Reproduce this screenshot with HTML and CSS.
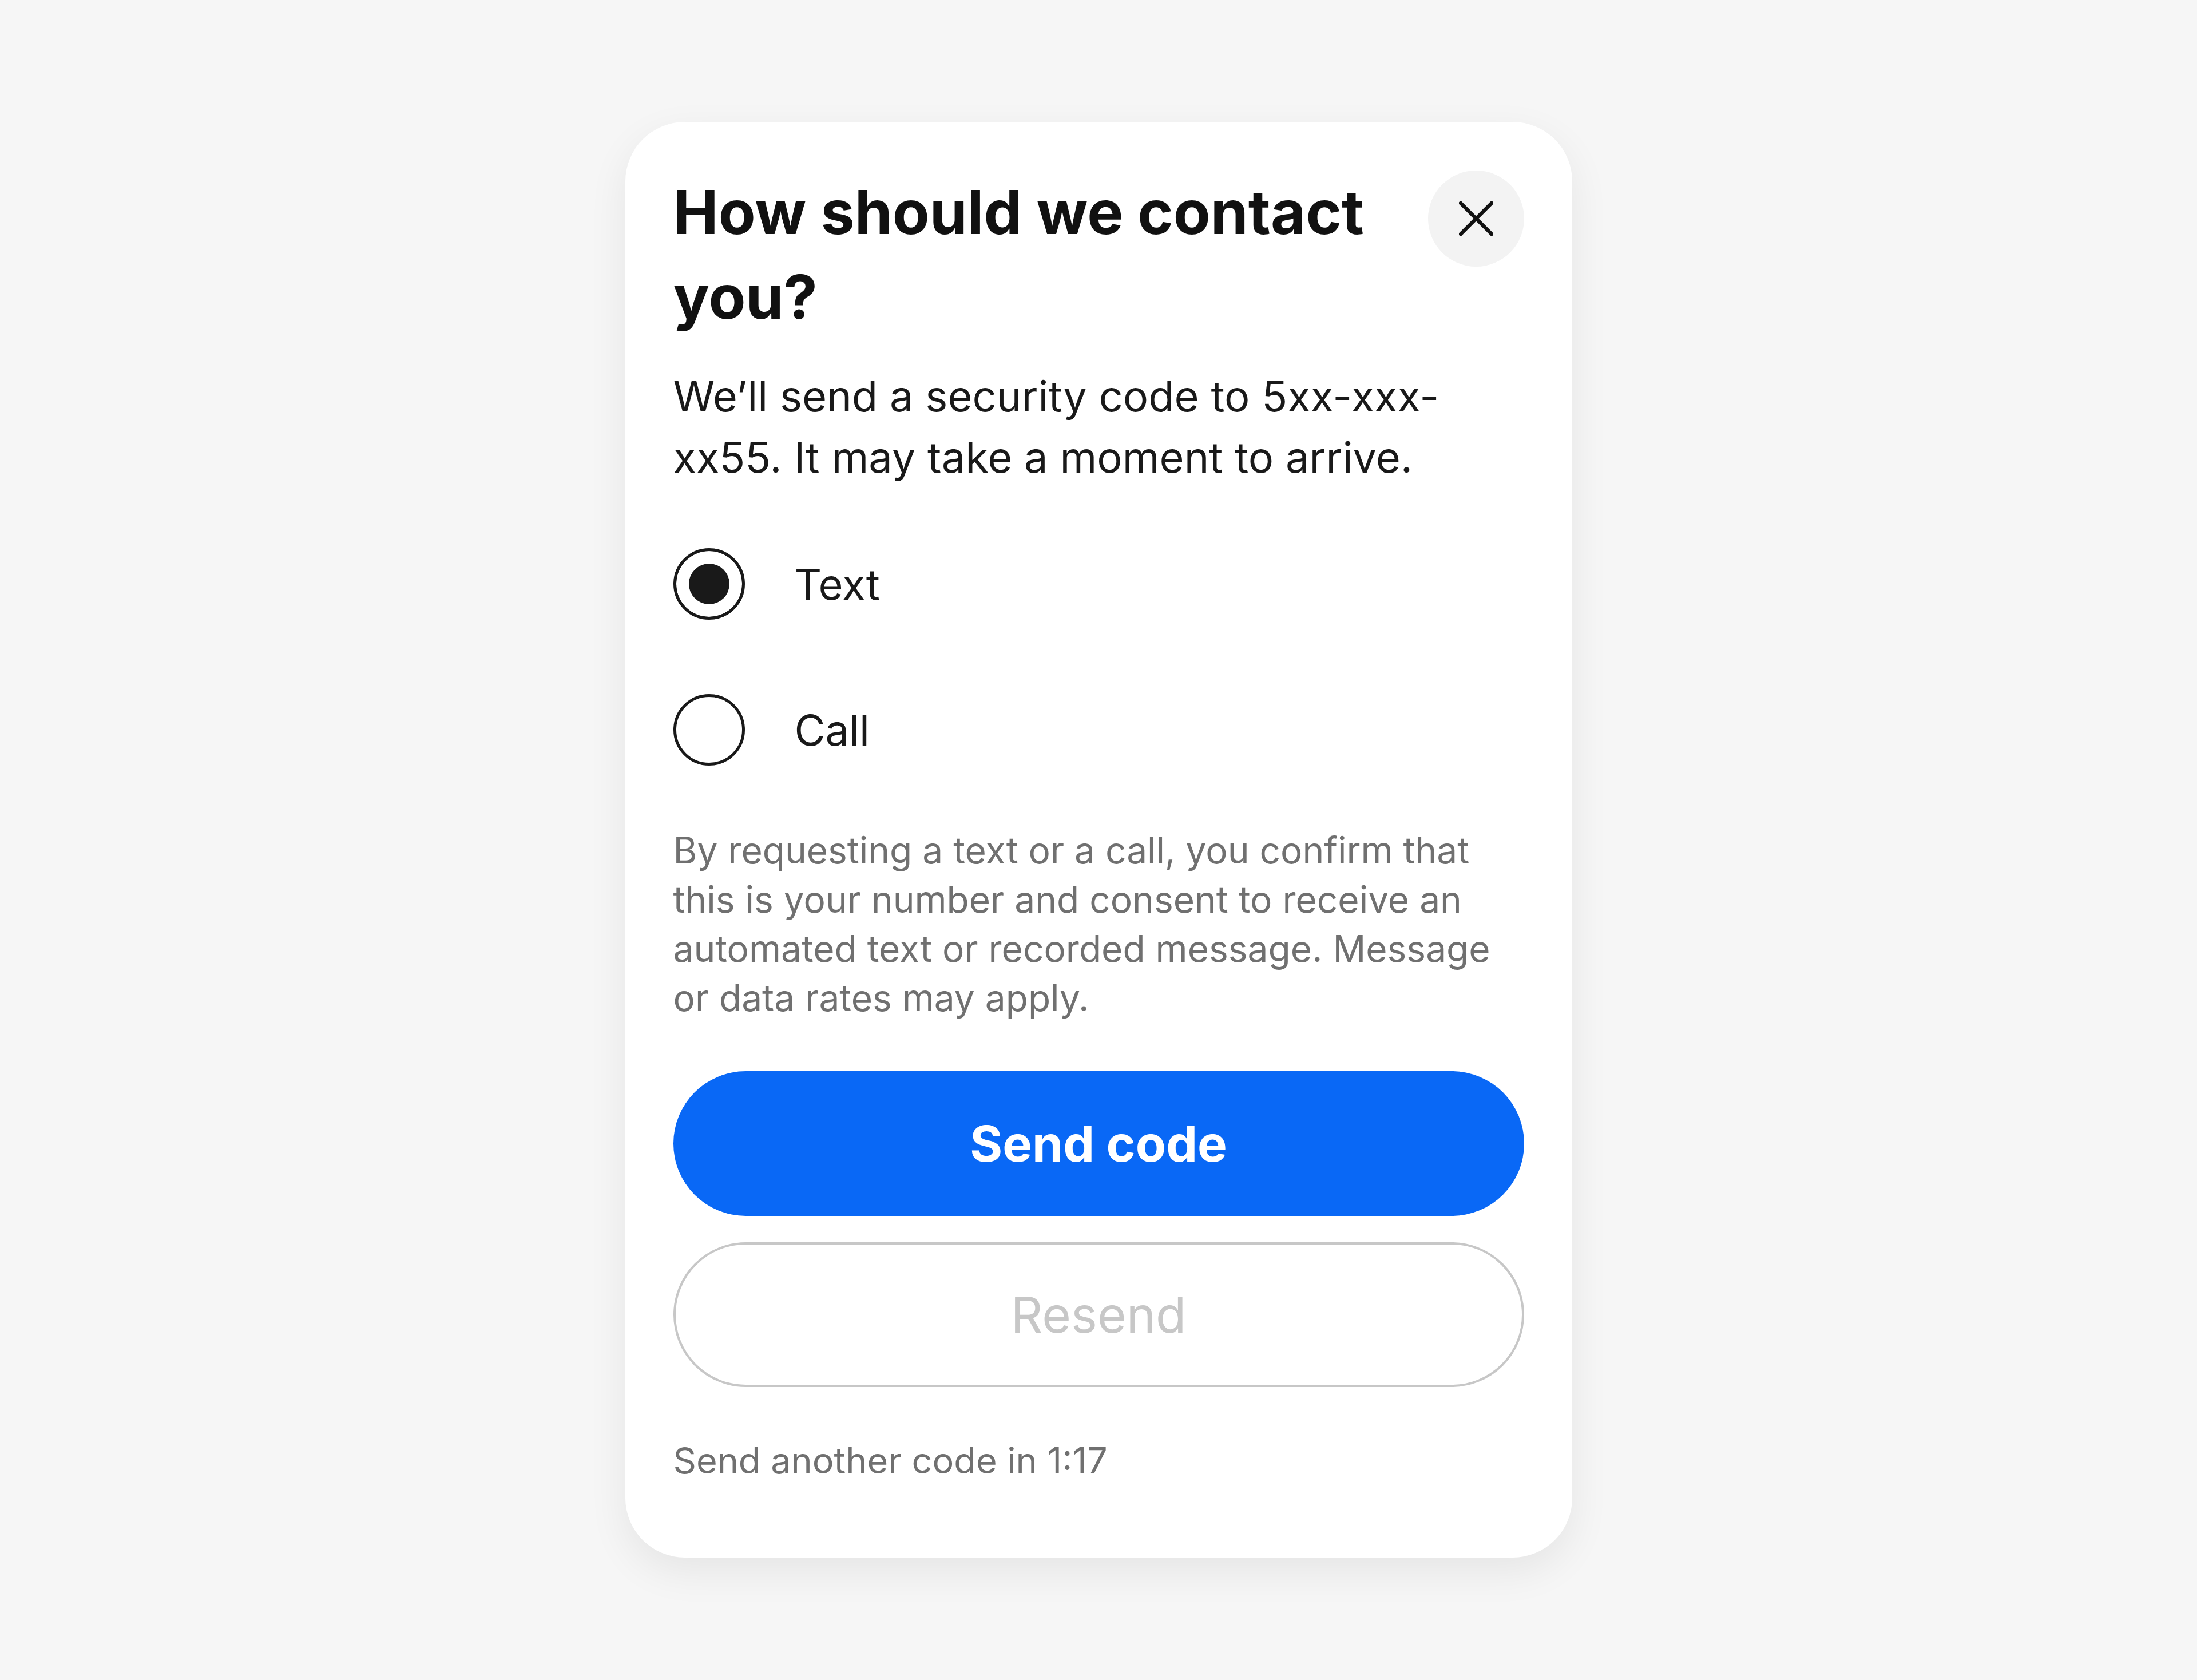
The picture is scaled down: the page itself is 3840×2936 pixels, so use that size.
FILE: index.html
```html
<!DOCTYPE html>
<html lang="en">
<head>
  <meta charset="UTF-8">
  <title>How should we contact you?</title>
  <link rel="stylesheet" href="styles.css">
</head>
<body>

  <div class="dialog">
    <div class="dialog-head">
      <h2 class="title">How should we contact you?</h2>
      <button type="button" class="close" aria-label="Close">
        <svg width="60" height="60" viewBox="0 0 60 60" fill="none" stroke="#111" stroke-width="6.5" stroke-linecap="round">
          <path d="M3 3 L57 57 M57 3 L3 57"/>
        </svg>
      </button>
    </div>

    <p class="lead">We’ll send a security code to 5xx-xxx-xx55. It may take a moment to arrive.</p>

    <div class="options">
      <label class="option">
        <input type="radio" name="method" value="text" checked>
        <span>Text</span>
      </label>
      <label class="option">
        <input type="radio" name="method" value="call">
        <span>Call</span>
      </label>
    </div>

    <p class="legal">By requesting a text or a call, you confirm that this is your number and consent to receive an automated text or recorded message. Message or data rates may apply.</p>

    <button type="button" class="btn btn-primary">Send code</button>
    <button type="button" class="btn btn-secondary" disabled>Resend</button>

    <p class="timer">Send another code in 1:17</p>
  </div>

</body>
</html>
```

FILE: styles.css
```css
body {
  margin: 0;
  padding-top: 213px;
  background-color: #f6f6f6;
  font-family: Inter, "Liberation Sans", Arial, sans-serif;
  color: #191919;
}
.dialog {
  width: 1655px;
  box-sizing: border-box;
  margin: 0 auto 200px;
  padding: 84px 84px 127px;
  background-color: #fff;
  border-radius: 104px;
  box-shadow: 0 24px 70px rgba(0, 0, 0, 0.07);
}
.dialog-head {
  display: flex;
  align-items: flex-start;
  justify-content: space-between;
  gap: 40px;
}
.title {
  margin: 0;
  font-size: 106px;
  line-height: 148px;
  font-weight: 700;
  color: #111;
}
.close {
  flex: none;
  width: 168px;
  height: 168px;
  margin-top: 1px;
  border: none;
  border-radius: 50%;
  background-color: #f3f3f3;
  display: flex;
  align-items: center;
  justify-content: center;
  padding: 0;
  cursor: pointer;
}
.lead {
  margin: 46px 0 0;
  font-size: 74px;
  line-height: 107px;
}
.options {
  margin-top: 105px;
  display: flex;
  flex-direction: column;
  gap: 130px;
}
.option {
  display: flex;
  align-items: center;
  gap: 87px;
  font-size: 74px;
  cursor: pointer;
}
.option input {
  appearance: none;
  -webkit-appearance: none;
  margin: 0;
  width: 125px;
  height: 125px;
  border: 5px solid #191919;
  border-radius: 50%;
  background-color: #fff;
}
.option input:checked {
  background-color: #191919;
  box-shadow: inset 0 0 0 22px #fff;
}
.legal {
  max-width: 1460px;
  margin: 105px 0 0;
  font-size: 64px;
  line-height: 86px;
  color: #707070;
}
.btn {
  display: block;
  width: 100%;
  height: 253px;
  border-radius: 127px;
  font-family: inherit;
  font-size: 87px;
  cursor: pointer;
}
.btn-primary {
  margin-top: 85px;
  border: none;
  background-color: #0968f6;
  color: #fff;
  font-weight: 700;
}
.btn-secondary {
  margin-top: 46px;
  border: 4px solid #c7c7c7;
  background-color: #fff;
  color: #c7c7c7;
  cursor: default;
}
.timer {
  margin: 85px 0 0;
  font-size: 63px;
  line-height: 86px;
  color: #707070;
}
```
